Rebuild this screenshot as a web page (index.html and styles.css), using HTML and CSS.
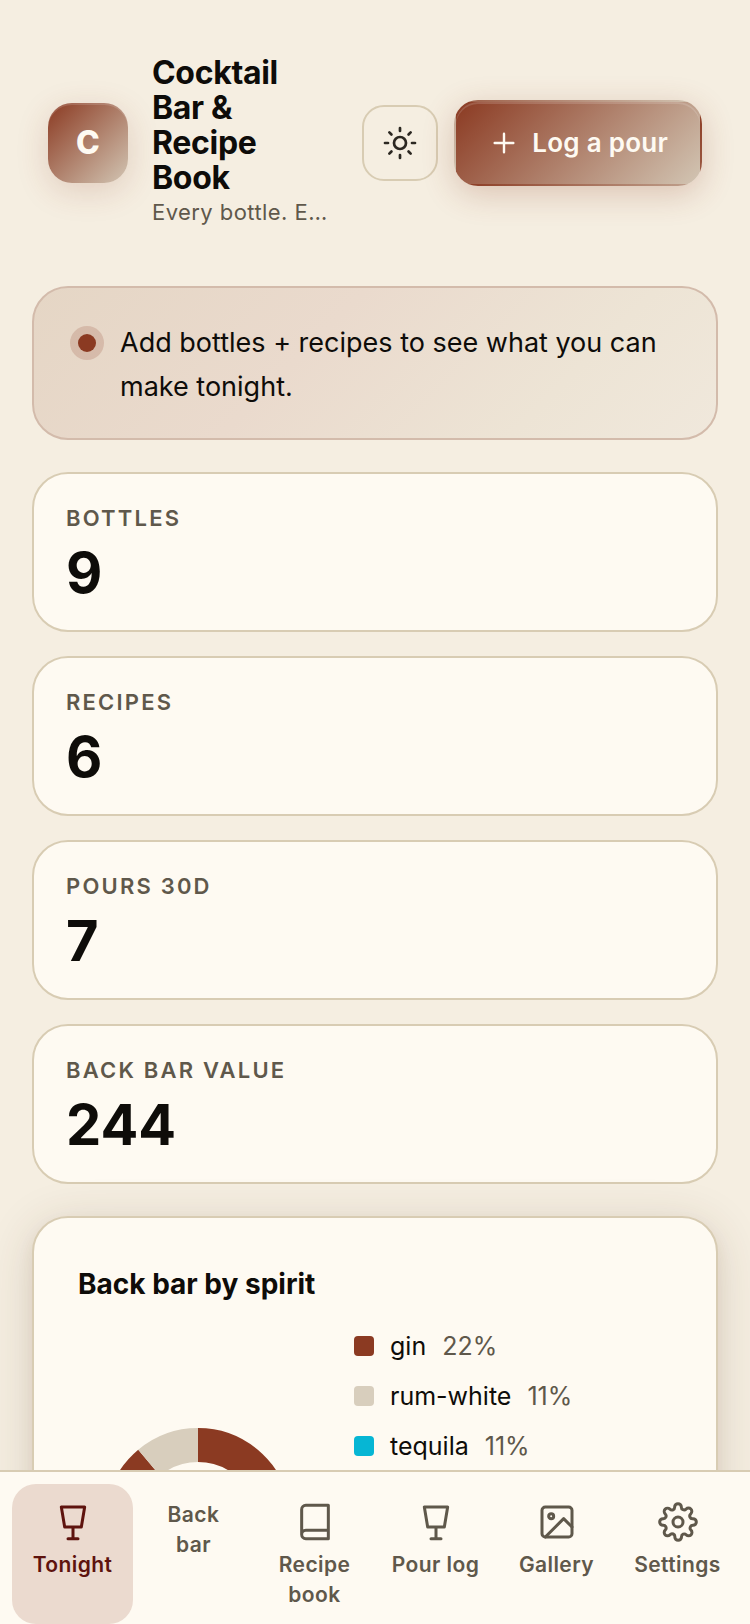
FILE: index.html
```html
<!DOCTYPE html>
<html lang="en">
<head>
    <meta charset="UTF-8">
    <meta name="viewport" content="width=device-width, initial-scale=1">
    <title>Cocktail Bar &amp; Recipe Book</title>
    <link rel="stylesheet" href="styles.css">
</head>
<body>
    <div class="app">
        <div class="scroll">
            <header class="topbar">
                <div class="logo" aria-hidden="true">C</div>
                <div class="brand">
                    <h1>Cocktail Bar &amp; Recipe Book</h1>
                    <p>Every bottle. Every recipe. Every pour.</p>
                </div>
                <div class="actions">
                    <button class="icon-btn" type="button" aria-label="Toggle theme">
                        <svg class="icon-sun" viewBox="0 0 24 24">
                            <circle cx="12" cy="12" r="4"/>
                            <path d="M12 2v2M12 20v2M4.9 4.9l1.4 1.4M17.7 17.7l1.4 1.4M2 12h2M20 12h2M4.9 19.1l1.4-1.4M17.7 6.3l1.4-1.4"/>
                        </svg>
                    </button>
                    <button class="primary-btn" type="button">
                        <svg class="icon-plus" viewBox="0 0 24 24"><path d="M12 5v14M5 12h14"/></svg>
                        Log a pour
                    </button>
                </div>
            </header>

            <main class="content">
                <div class="notice" role="status">
                    <span class="dot"></span>
                    <p>Add bottles + recipes to see what you can make tonight.</p>
                </div>

                <section class="stats" aria-label="Bar totals">
                    <div class="stat">
                        <div class="stat-label">Bottles</div>
                        <div class="stat-value">9</div>
                    </div>
                    <div class="stat">
                        <div class="stat-label">Recipes</div>
                        <div class="stat-value">6</div>
                    </div>
                    <div class="stat">
                        <div class="stat-label">Pours 30d</div>
                        <div class="stat-value">7</div>
                    </div>
                    <div class="stat">
                        <div class="stat-label">Back bar value</div>
                        <div class="stat-value">244</div>
                    </div>
                </section>

                <section class="panel">
                    <h2>Back bar by spirit</h2>
                    <div class="chart">
                        <!-- each ring is 9 units round, one unit per bottle -->
                        <svg class="donut" viewBox="0 0 240 240" role="img" aria-label="Back bar by spirit">
                            <g transform="rotate(-90 120 120)">
                                <circle class="c-brown" cx="120" cy="120" r="76" pathLength="9" stroke-dasharray="2 7"/>
                                <circle class="c-sand" cx="120" cy="120" r="76" pathLength="9" stroke-dasharray="1 8" stroke-dashoffset="-2"/>
                                <circle class="c-cyan" cx="120" cy="120" r="76" pathLength="9" stroke-dasharray="1 8" stroke-dashoffset="-3"/>
                                <circle class="c-amber" cx="120" cy="120" r="76" pathLength="9" stroke-dasharray="1 8" stroke-dashoffset="-4"/>
                                <circle class="c-green" cx="120" cy="120" r="76" pathLength="9" stroke-dasharray="1 8" stroke-dashoffset="-5"/>
                                <circle class="c-rose" cx="120" cy="120" r="76" pathLength="9" stroke-dasharray="1 8" stroke-dashoffset="-6"/>
                                <circle class="c-brown" cx="120" cy="120" r="76" pathLength="9" stroke-dasharray="1 8" stroke-dashoffset="-7"/>
                                <circle class="c-sand" cx="120" cy="120" r="76" pathLength="9" stroke-dasharray="1 8" stroke-dashoffset="-8"/>
                            </g>
                        </svg>
                        <ul class="legend">
                            <li><span class="swatch c-brown"></span>gin <span class="pct">22%</span></li>
                            <li><span class="swatch c-sand"></span>rum-white <span class="pct">11%</span></li>
                            <li><span class="swatch c-cyan"></span>tequila <span class="pct">11%</span></li>
                            <li><span class="swatch c-amber"></span>bourbon <span class="pct">11%</span></li>
                            <li><span class="swatch c-green"></span>vodka <span class="pct">11%</span></li>
                            <li><span class="swatch c-rose"></span>campari <span class="pct">11%</span></li>
                            <li><span class="swatch c-brown"></span>vermouth <span class="pct">11%</span></li>
                            <li><span class="swatch c-sand"></span>triple-sec <span class="pct">11%</span></li>
                        </ul>
                    </div>
                </section>
            </main>
        </div>

        <nav class="tabs" aria-label="Main">
            <a class="tab active" href="#tonight" aria-current="page">
                <svg viewBox="0 0 24 24"><path d="M5 3h14l-2 12H7L5 3zM12 15v7M9 22h6"/></svg>
                <span>Tonight</span>
            </a>
            <a class="tab" href="#back-bar">
                <span>Back bar</span>
            </a>
            <a class="tab" href="#recipes">
                <svg viewBox="0 0 24 24"><path d="M4 19.5V4.5A2.5 2.5 0 0 1 6.5 2H20v20H6.5A2.5 2.5 0 0 1 4 19.5 2.5 2.5 0 0 1 6.5 17H20"/></svg>
                <span>Recipe book</span>
            </a>
            <a class="tab" href="#pours">
                <svg viewBox="0 0 24 24"><path d="M5 3h14l-2 12H7L5 3zM12 15v7M9 22h6"/></svg>
                <span>Pour log</span>
            </a>
            <a class="tab" href="#gallery">
                <svg viewBox="0 0 24 24"><rect x="3" y="3" width="18" height="18" rx="2"/><circle cx="8.5" cy="8.5" r="1.5"/><path d="M21 15l-5-5L5 21"/></svg>
                <span>Gallery</span>
            </a>
            <a class="tab" href="#settings">
                <svg viewBox="0 0 24 24"><circle cx="12" cy="12" r="3"/><path d="M19.4 15a1.65 1.65 0 0 0 .33 1.82l.06.06a2 2 0 1 1-2.83 2.83l-.06-.06a1.65 1.65 0 0 0-2.8 1.17V21a2 2 0 0 1-4 0v-.09a1.65 1.65 0 0 0-2.9-1.26l-.06.06a2 2 0 1 1-2.83-2.83l.06-.06A1.65 1.65 0 0 0 3.09 14H3a2 2 0 0 1 0-4h.09a1.65 1.65 0 0 0 1.28-2.82l-.06-.06a2 2 0 1 1 2.83-2.83l.06.06A1.65 1.65 0 0 0 10 3.09V3a2 2 0 0 1 4 0v.09a1.65 1.65 0 0 0 2.82 1.17l.06-.06a2 2 0 1 1 2.83 2.83l-.06.06A1.65 1.65 0 0 0 20.91 10H21a2 2 0 0 1 0 4h-.09a1.65 1.65 0 0 0-1.51 1z"/></svg>
                <span>Settings</span>
            </a>
        </nav>
    </div>
</body>
</html>
```
FILE: styles.css
```css
:root {
    --bg: #f5eee1;
    --card: #fefaf2;
    --line: #d8ccb3;
    --ink: #0e0c09;
    --muted: #5f584b;
    --accent: #8b3a22;
    --sand: #d8cebd;
}
* {
    box-sizing: border-box;
}
body {
    margin: 0;
    background-color: var(--bg);
    color: var(--ink);
    font-family: Inter, "Liberation Sans", sans-serif;
    font-size: 27px;
    line-height: 44px;
}
h1, h2, p, ul {
    margin: 0;
    padding: 0;
}
svg {
    display: block;
    flex: none;
    fill: none;
    stroke: currentColor;
    stroke-width: 1.8;
    stroke-linecap: round;
    stroke-linejoin: round;
}
button {
    font: inherit;
    cursor: pointer;
}
.app {
    display: flex;
    flex-direction: column;
    height: 100vh;
}
.scroll {
    flex: 1;
    min-height: 0;
    overflow-y: auto;
    scrollbar-width: none;
}

/* header */
.topbar {
    display: flex;
    align-items: center;
    padding: 55px 48px 56px;
}
.logo {
    display: flex;
    align-items: center;
    justify-content: center;
    flex: none;
    width: 80px;
    height: 80px;
    border-radius: 24px;
    background: linear-gradient(135deg, var(--accent), #d2c5b3);
    box-shadow: inset 0 2px 0 rgba(255,255,255,0.15), 0 8px 32px rgba(139,58,34,0.18);
    color: var(--card);
    font-size: 32px;
    font-weight: 800;
}
.brand {
    flex: 1;
    min-width: 0;
    margin: 0 32px 0 24px;
}
.brand h1 {
    font-size: 32px;
    line-height: 35px;
    font-weight: 700;
    letter-spacing: -0.01em;
}
.brand p {
    overflow: hidden;
    color: var(--muted);
    font-size: 22px;
    line-height: 35px;
    letter-spacing: 0.02em;
    text-overflow: ellipsis;
    white-space: nowrap;
}
.actions {
    display: flex;
    align-items: center;
    gap: 16px;
    flex: none;
}
.icon-btn {
    display: flex;
    align-items: center;
    justify-content: center;
    width: 76px;
    height: 76px;
    padding: 0;
    border: 2px solid var(--line);
    border-radius: 22px;
    background: transparent;
    color: #2c2822;
}
.icon-sun {
    width: 36px;
    height: 36px;
}
.primary-btn {
    display: flex;
    align-items: center;
    gap: 12px;
    padding: 20px 32px;
    border: 2px solid transparent;
    border-radius: 24px;
    background: linear-gradient(135deg, var(--accent), #d2c5b3);
    box-shadow: inset 0 2px 0 rgba(255,255,255,0.15), 0 8px 32px rgba(139,58,34,0.24);
    color: var(--card);
    font-size: 26px;
    font-weight: 600;
    line-height: 42px;
    letter-spacing: 0.01em;
    white-space: nowrap;
}
.icon-plus {
    width: 32px;
    height: 32px;
}

/* content */
.content {
    display: flex;
    flex-direction: column;
    gap: 32px;
    padding: 0 32px 48px;
}
.notice {
    display: flex;
    gap: 24px;
    padding: 33px 44px 29px;
    border: 2px solid #d3bbab;
    border-radius: 36px;
    background: linear-gradient(135deg, #e5d6c5, #eadacd 40%, #ede4d5 75%, #f0e8dc);
}
.dot {
    flex: none;
    width: 18px;
    height: 18px;
    margin-top: 13px;
    border-radius: 50%;
    background-color: var(--accent);
    box-shadow: 0 0 0 8px rgba(139,58,34,0.18);
}
.stats {
    display: grid;
    gap: 24px;
}
.stat {
    padding: 28px 32px 26px;
    border: 2px solid var(--line);
    border-radius: 36px;
    background-color: var(--card);
}
.stat-label {
    color: var(--muted);
    font-size: 22px;
    font-weight: 600;
    line-height: 33px;
    letter-spacing: 0.1em;
    text-transform: uppercase;
}
.stat-value {
    margin-top: 8px;
    font-size: 56px;
    font-weight: 700;
    line-height: 61px;
}
.panel {
    padding: 44px;
    border: 2px solid var(--line);
    border-radius: 36px;
    background-color: var(--card);
    box-shadow: 0 8px 48px rgba(70,50,30,0.16), 0 8px 16px rgba(139,58,34,0.08);
}
.panel h2 {
    font-size: 28px;
    font-weight: 700;
    line-height: 45px;
}
.chart {
    display: flex;
    align-items: center;
    gap: 36px;
    margin-top: 18px;
}
.donut {
    width: 240px;
    height: 240px;
    stroke-width: 34;
    stroke-linecap: butt;
}
.legend {
    display: grid;
    gap: 8px;
    list-style: none;
}
.legend li {
    display: flex;
    align-items: center;
    gap: 16px;
    font-size: 25px;
    line-height: 42px;
}
.swatch {
    width: 20px;
    height: 20px;
    border-radius: 4px;
    background-color: currentColor;
}
.pct {
    color: var(--muted);
}
.c-brown { color: var(--accent); stroke: currentColor; }
.c-sand { color: var(--sand); stroke: currentColor; }
.c-cyan { color: #06b6d4; stroke: currentColor; }
.c-amber { color: #d99a2b; stroke: currentColor; }
.c-green { color: #5f8d4e; stroke: currentColor; }
.c-rose { color: #c2556b; stroke: currentColor; }

/* bottom tabs */
.tabs {
    display: grid;
    grid-template-columns: repeat(6, 1fr);
    padding: 12px 12px 0;
    border-top: 2px solid var(--line);
    background-color: var(--card);
}
.tab {
    display: flex;
    flex-direction: column;
    align-items: center;
    gap: 6px;
    padding: 16px 16px 14px;
    border-radius: 24px;
    color: var(--muted);
    font-size: 21px;
    font-weight: 600;
    line-height: 30px;
    letter-spacing: 0.02em;
    text-align: center;
    text-decoration: none;
}
.tab svg {
    width: 40px;
    height: 40px;
    margin: 2px 0;
}
.tab.active {
    background-color: #ebdacf;
    color: #5e130e;
}
```
